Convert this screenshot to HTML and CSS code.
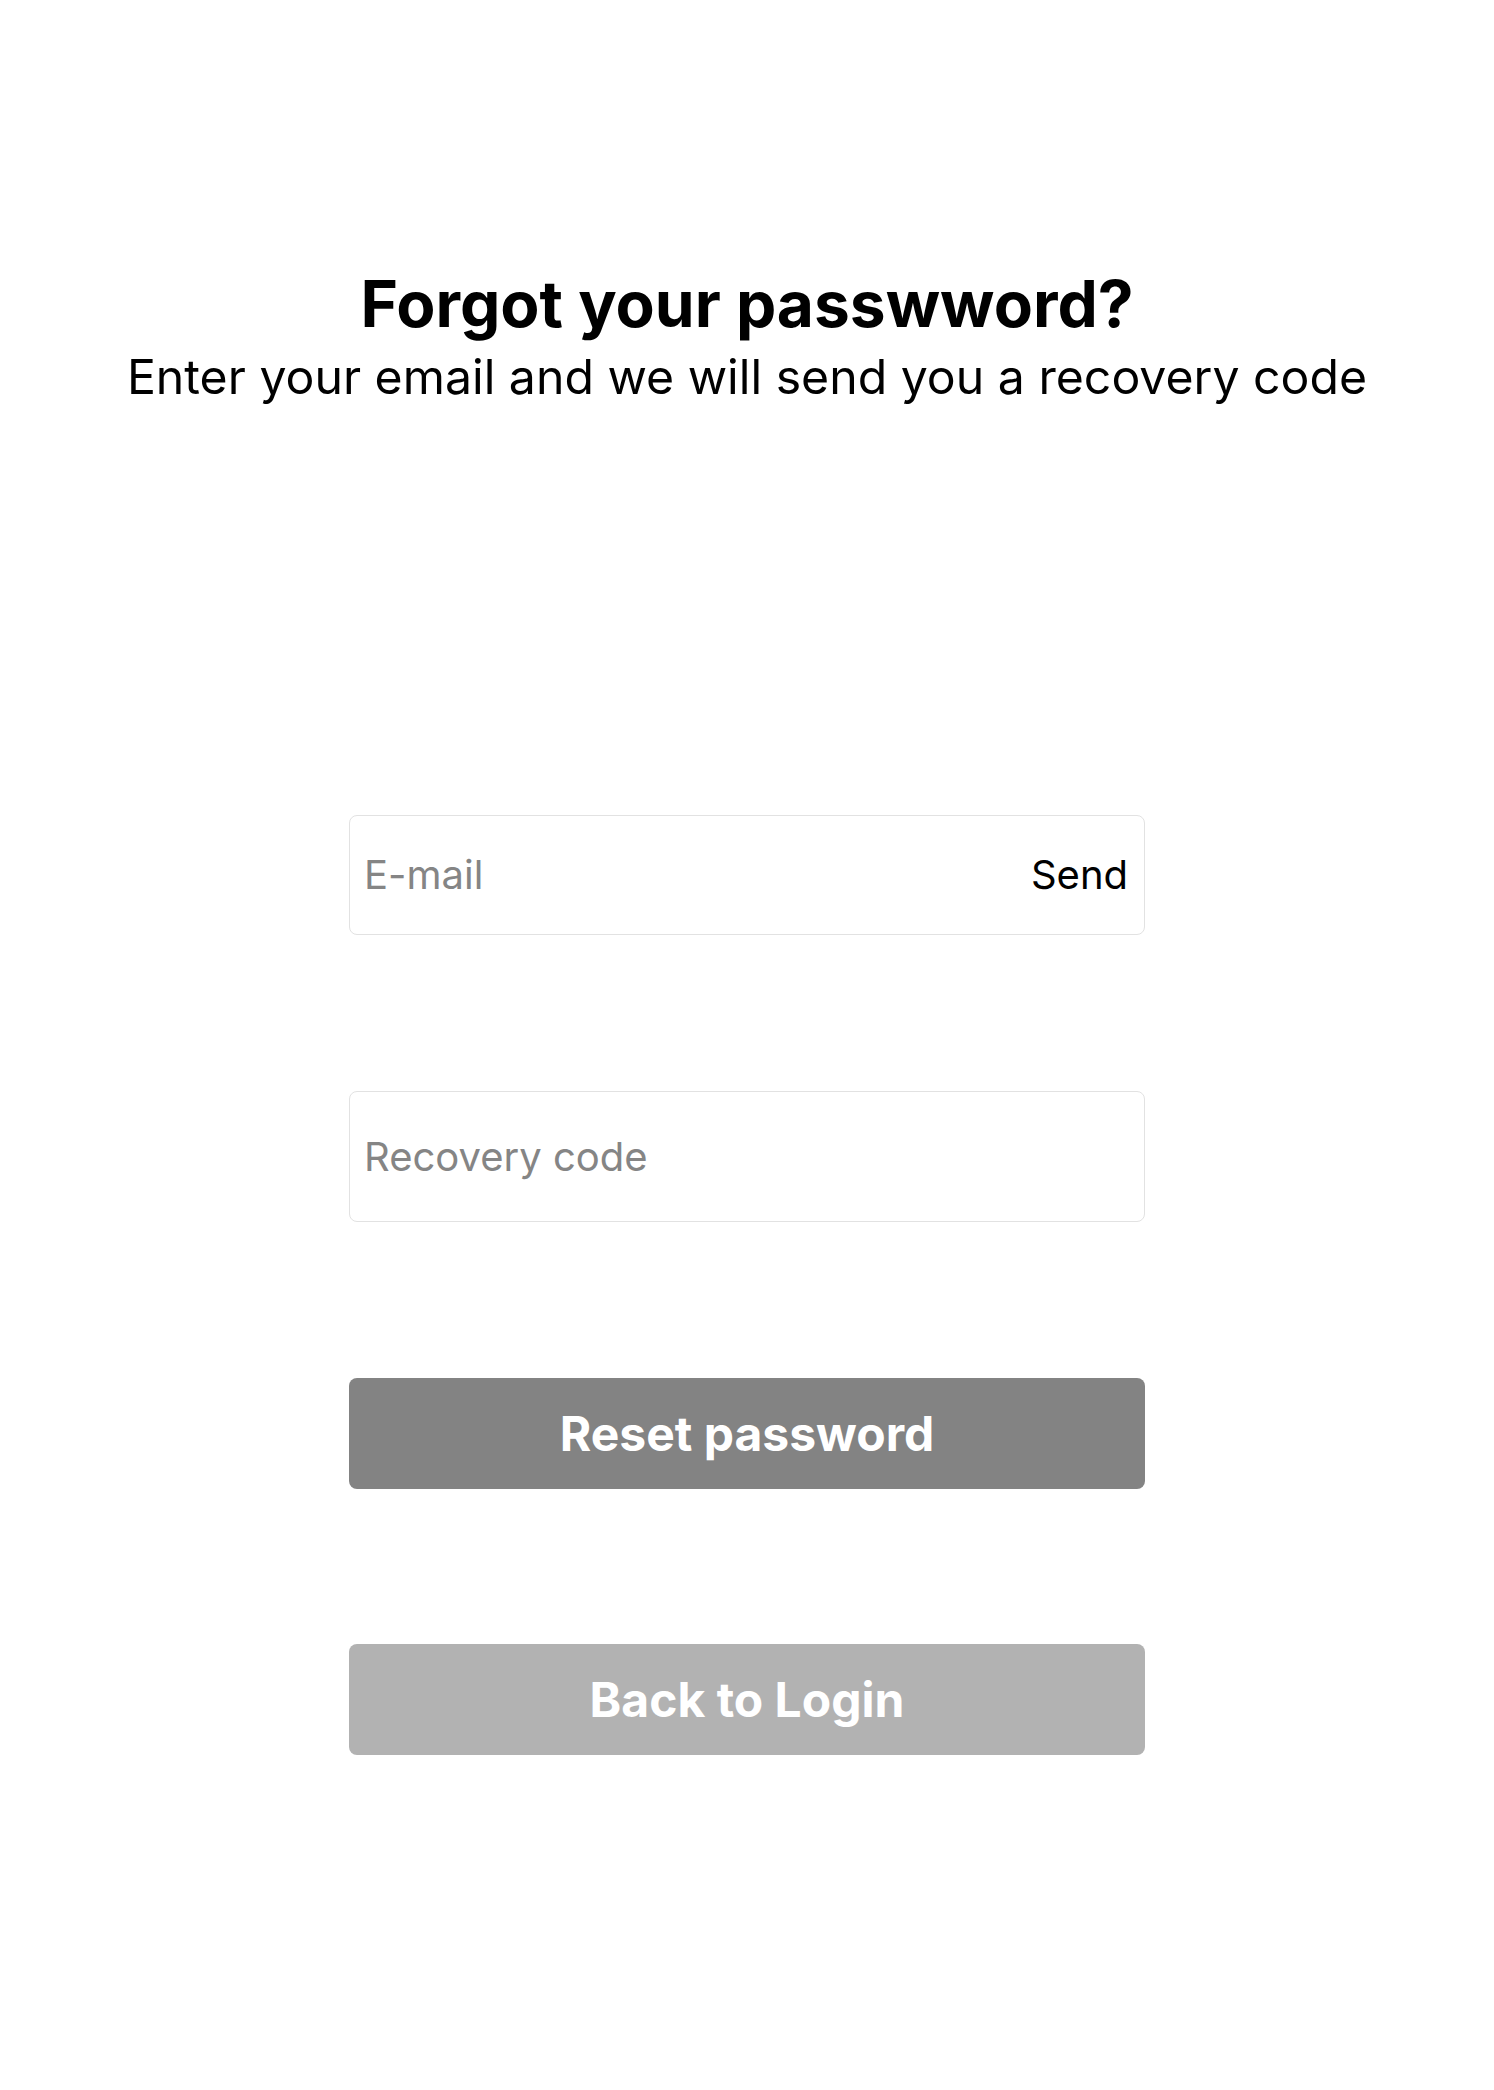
FILE: index.html
```html
<!DOCTYPE html>
<html lang="en">
<head>
<meta charset="utf-8">
<title>Forgot your password</title>
<link rel="stylesheet" href="styles.css">
</head>
<body>
<main class="page">
  <header class="intro">
    <h1 class="title">Forgot your passwword?</h1>
    <p class="subtitle">Enter your email and we will send you a recovery code</p>
  </header>
  <form class="form">
    <div class="field field-email">
      <input class="field-input" type="email" placeholder="E-mail">
      <button class="send" type="button">Send</button>
    </div>
    <div class="field field-code">
      <input class="field-input" type="text" placeholder="Recovery code">
    </div>
    <button class="btn btn-primary" type="button">Reset password</button>
    <button class="btn btn-secondary" type="button">Back to Login</button>
  </form>
</main>
</body>
</html>
```

FILE: styles.css
```css
* {
  box-sizing: border-box;
}

html, body {
  margin: 0;
  padding: 0;
  background: #ffffff;
}

body {
  font-family: Inter, "Noto Sans", "Liberation Sans", sans-serif;
  color: #000000;
}

.page {
  min-height: 2090px;
  display: flex;
  flex-direction: column;
  align-items: center;
  padding-top: 266px;
}

.intro {
  display: flex;
  flex-direction: column;
  align-items: center;
  text-align: center;
}

.title {
  margin: 0;
  font-size: 64px;
  line-height: 1.2;
  font-weight: 700;
  letter-spacing: 0;
}

.subtitle {
  margin: 5px 0 0;
  font-size: 48.2px;
  line-height: 1.2;
  font-weight: 400;
}

.form {
  width: 796px;
  margin-top: 409px;
  display: flex;
  flex-direction: column;
  gap: 156px;
}

.field {
  display: flex;
  align-items: center;
  border: 1.5px solid #e2e2e2;
  border-radius: 8px;
  background: #ffffff;
  padding: 0 16px 0 14px;
}

.field-email {
  height: 120px;
}

.field-code {
  height: 131px;
}

.field-input {
  flex: 1;
  min-width: 0;
  border: none;
  outline: none;
  background: transparent;
  padding: 0;
  font-family: inherit;
  font-size: 40px;
  color: #000000;
}

.field-input::placeholder {
  color: #858585;
  opacity: 1;
}

.send {
  border: none;
  background: transparent;
  padding: 0;
  font-family: inherit;
  font-size: 40px;
  color: #000000;
  cursor: pointer;
}

.btn {
  height: 111px;
  border: none;
  border-radius: 8px;
  display: flex;
  align-items: center;
  justify-content: center;
  font-family: inherit;
  font-size: 48px;
  font-weight: 700;
  color: #ffffff;
  cursor: pointer;
}

.btn-primary {
  background: #838383;
}

.btn-secondary {
  background: #b2b2b2;
  margin-top: -1px;
}
```
